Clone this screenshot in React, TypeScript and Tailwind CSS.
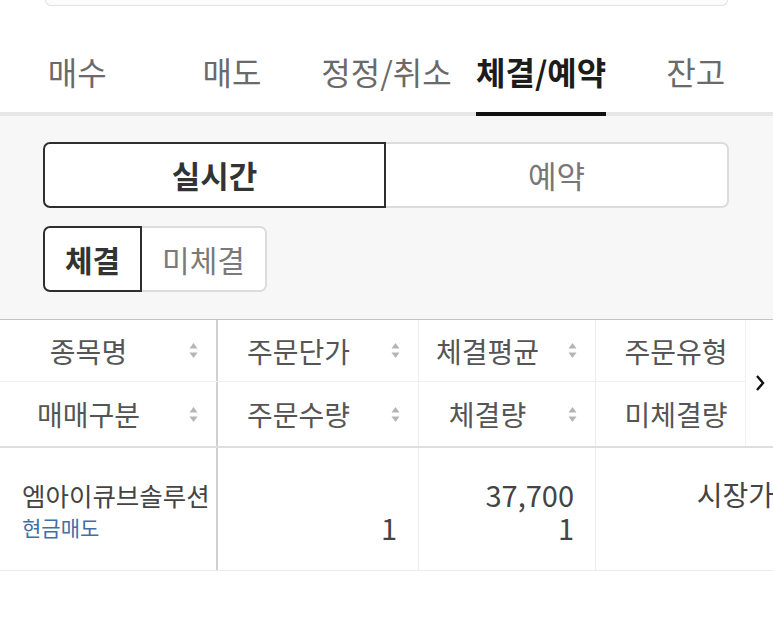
import React from 'react';

const tabs = ['매수', '매도', '정정/취소', '체결/예약', '잔고'];

function SortIcon() {
  return (
    <svg width="9" height="17" viewBox="0 0 9 17" className="ml-[12px] mr-[18px] shrink-0">
      <path d="M4.5 1 L8.5 6.5 L0.5 6.5 Z" fill="#b5b5b5" />
      <path d="M4.5 16 L8.5 10.5 L0.5 10.5 Z" fill="#b5b5b5" />
    </svg>
  );
}

function HeadCell({ label, className = '' }: { label: string; className?: string }) {
  return (
    <div className={`flex items-center ${className}`}>
      <span className="flex-1 text-center whitespace-nowrap">{label}</span>
      <SortIcon />
    </div>
  );
}

export default function App() {
  return (
    <div className="w-[773px] h-[641px] bg-white overflow-hidden font-['Noto_Sans_CJK_KR','Noto_Sans',sans-serif]">
      {/* 검색창 하단 (잘려 보임) */}
      <div className="mx-[45px] h-[6px] border-x border-b border-[#e2e2e2] rounded-b-[8px] bg-[#fcfcfc]" />

      {/* 상단 탭 */}
      <div className="flex border-b-4 border-[#e6e6e6]">
        {tabs.map((t) => {
          const active = t === '체결/예약';
          return (
            <div key={t} className="flex-1 h-[106px] flex items-end justify-center pb-[18px]">
              <span
                className={`relative leading-[46px] text-[32px] whitespace-nowrap ${
                  active ? 'font-bold text-[#1c1c1c]' : 'text-[#6a6a6a]'
                }`}
              >
                {t}
                {active && <span className="absolute left-0 right-0 -bottom-[22px] h-[4px] bg-[#111]" />}
              </span>
            </div>
          );
        })}
      </div>

      {/* 실시간 / 예약 */}
      <div className="bg-[#f7f7f7] pt-[26px] pb-[27px] pl-[43px] pr-[44px]">
        <div className="flex h-[66px] rounded-[7px] bg-white text-[31px]">
          <div className="w-[343px] flex items-center justify-center border-2 border-[#2e2e2e] rounded-l-[7px] font-bold text-[#333]">
            실시간
          </div>
          <div className="flex-1 flex items-center justify-center border-2 border-l-0 border-[#dcdcdc] rounded-r-[7px] text-[#777]">
            예약
          </div>
        </div>

        <div className="mt-[18px] flex w-[224px] h-[66px] rounded-[7px] bg-white text-[30px]">
          <div className="w-[99px] flex items-center justify-center border-2 border-[#2e2e2e] rounded-l-[7px] font-bold text-[#333]">
            체결
          </div>
          <div className="flex-1 flex items-center justify-center border-2 border-l-0 border-[#dcdcdc] rounded-r-[7px] text-[#7a7a7a]">
            미체결
          </div>
        </div>
      </div>

      {/* 체결 내역 표 */}
      <div className="relative border-t border-[#c4c4c4] w-[773px] overflow-hidden">
        <div className="relative border-b-2 border-[#dedede] text-[28px] text-[#555]">
          <div className="grid grid-cols-[218px_201px_177px_199px] h-[62px] border-b border-[#efefef]">
            <HeadCell label="종목명" className="border-r-2 border-[#d0d0d0]" />
            <HeadCell label="주문단가" className="border-r border-[#ededed]" />
            <HeadCell label="체결평균" className="border-r border-[#ededed]" />
            <HeadCell label="주문유형" />
          </div>
          <div className="grid grid-cols-[218px_201px_177px_199px] h-[64px]">
            <HeadCell label="매매구분" className="border-r-2 border-[#d0d0d0]" />
            <HeadCell label="주문수량" className="border-r border-[#ededed]" />
            <HeadCell label="체결량" className="border-r border-[#ededed]" />
            <HeadCell label="미체결량" />
          </div>
          {/* 가로 스크롤 표시 */}
          <div className="absolute top-0 right-0 w-[28px] h-full bg-white border-l border-[#f1f1f1] flex items-center justify-center">
            <svg width="12" height="20" viewBox="0 0 12 20">
              <path d="M3 3 L9 10 L3 17" fill="none" stroke="#111" strokeWidth="2.4" />
            </svg>
          </div>
        </div>

        <div className="grid grid-cols-[218px_201px_177px_199px] h-[123px] border-b border-[#ececec] text-[#444]">
          <div className="border-r-2 border-[#d0d0d0] pl-[22px] pt-[30px]">
            <div className="leading-[33px] text-[25.5px] whitespace-nowrap">엠아이큐브솔루션</div>
            <div className="leading-[33px] text-[21px] text-[#3f6fa8]">현금매도</div>
          </div>
          <div className="border-r border-[#ededed] pr-[21px] pt-[30px] text-right text-[29px]">
            <div className="h-[33px]" />
            <div className="leading-[33px]">1</div>
          </div>
          <div className="border-r border-[#ededed] pr-[21px] pt-[30px] text-right text-[29px]">
            <div className="leading-[33px]">37,700</div>
            <div className="leading-[33px]">1</div>
          </div>
          <div className="pr-[21px] pt-[30px] text-right text-[28px]">
            <div className="leading-[33px] whitespace-nowrap">시장가</div>
          </div>
        </div>
      </div>
    </div>
  );
}
